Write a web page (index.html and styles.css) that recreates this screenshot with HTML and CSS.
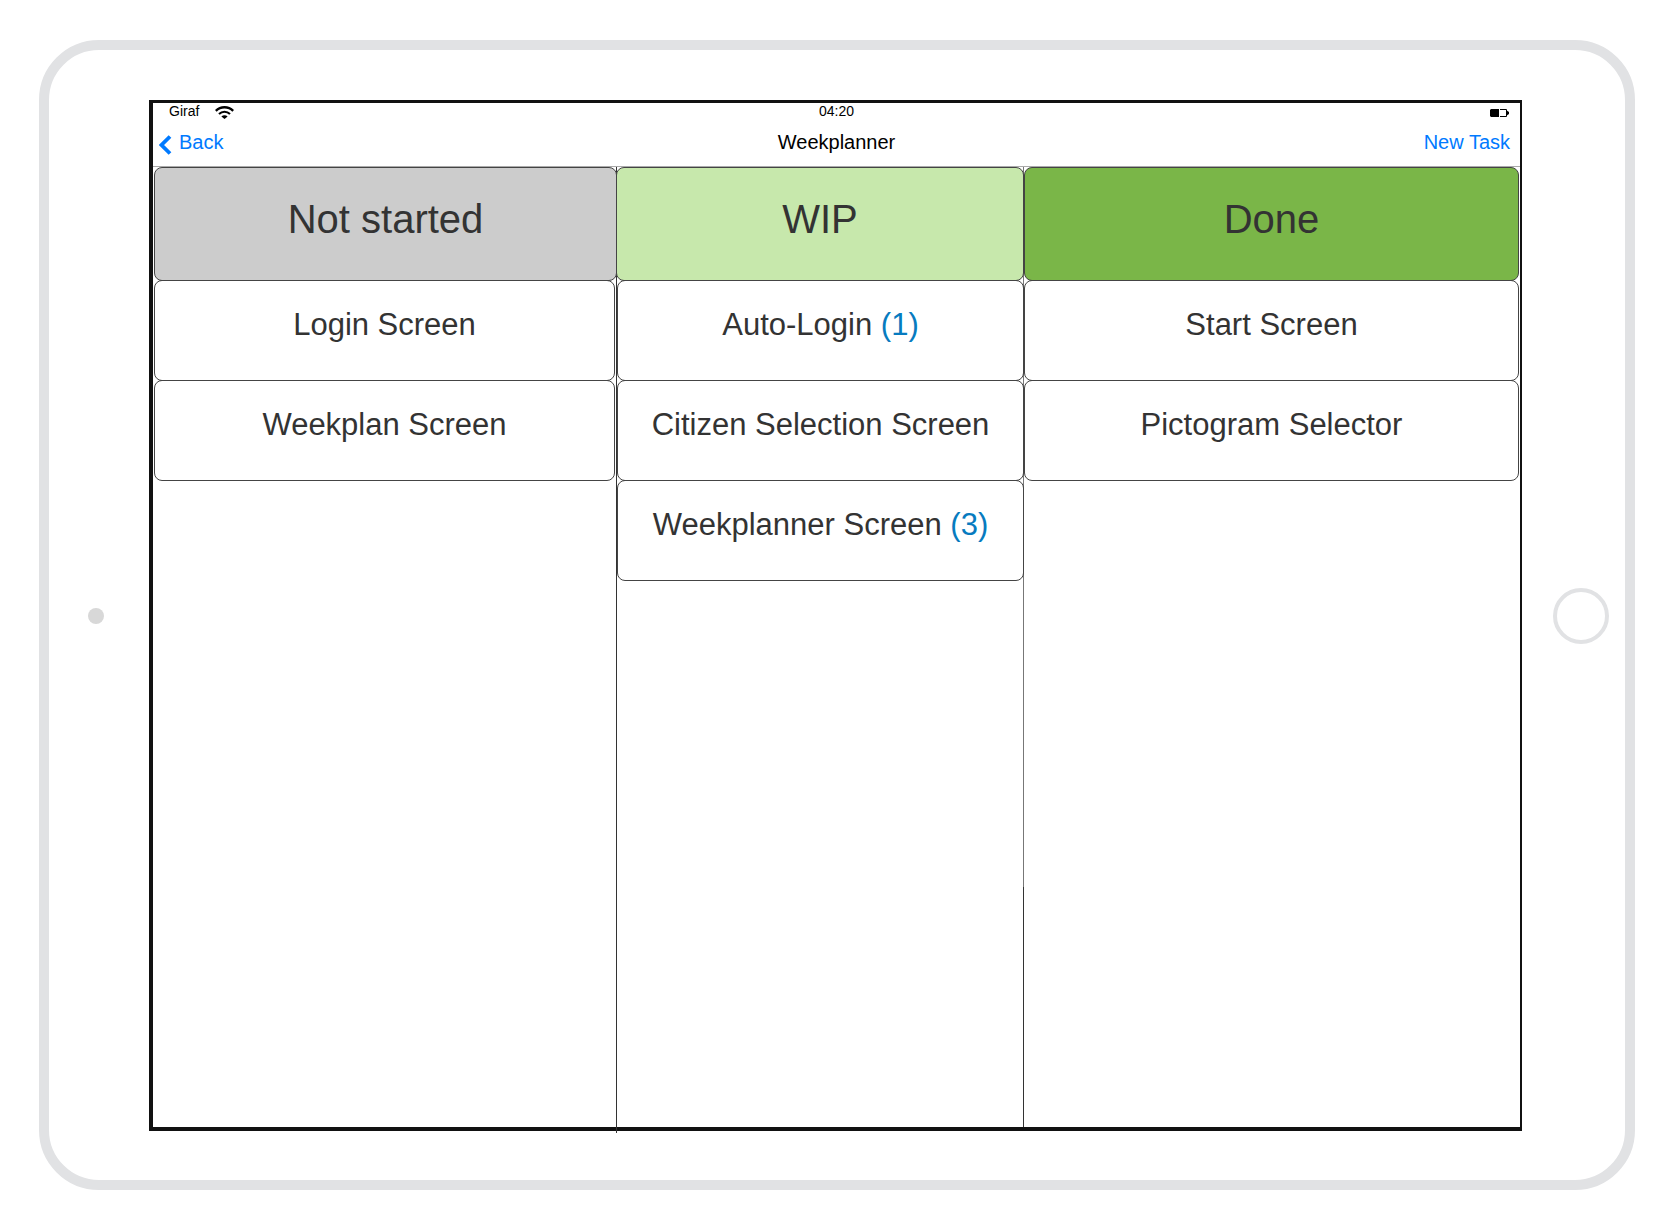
FILE: index.html
```
<!DOCTYPE html>
<html lang="en">
<head>
<meta charset="utf-8">
<meta name="viewport" content="width=device-width, initial-scale=1">
<title>Weekplanner</title>
<link rel="stylesheet" href="styles.css">
</head>
<body>
<div class="tablet">
  <div class="bezel bezel-left"><span class="camera"></span></div>
  <main class="screen">
    <div class="status-bar">
      <div class="carrier">
        <span>Giraf</span>
        <svg class="wifi" width="19" height="13" viewBox="0 0 19 13" aria-hidden="true">
          <path d="M.8 4.8C5.6 0 13.4 0 18.2 4.8" fill="none" stroke="#000" stroke-width="2.4"/>
          <path d="M4 8C7.2 4.9 11.8 4.9 15 8" fill="none" stroke="#000" stroke-width="2.1"/>
          <path d="M6.4 10.4C8.2 8.7 10.8 8.7 12.6 10.4L9.5 13Z"/>
        </svg>
      </div>
      <time>04:20</time>
      <svg class="battery" width="19" height="8" viewBox="0 0 19 8" aria-hidden="true">
        <path d="M1 0H9V8H1L0 7V1Z"/>
        <path d="M10 .5H16.5V7.5H10" fill="none" stroke="#000"/>
        <path d="M16 1L19 3V5L16 7Z"/>
      </svg>
    </div>
    <header class="nav-bar">
      <button class="nav-button back" type="button">
        <svg width="13" height="20" viewBox="0 0 13 20" aria-hidden="true">
          <path d="M11 1.5L2.5 10L11 18.5" fill="none" stroke="#007aff" stroke-width="3.8"/>
        </svg>
        <span>Back</span>
      </button>
      <h1 class="title">Weekplanner</h1>
      <button class="nav-button new-task" type="button">New Task</button>
    </header>
    <div class="board">
      <section class="column not-started">
        <h2 class="column-title">Not started</h2>
        <ul class="tasks">
          <li class="task">Login Screen</li>
          <li class="task">Weekplan Screen</li>
        </ul>
      </section>
      <section class="column wip">
        <h2 class="column-title">WIP</h2>
        <ul class="tasks">
          <li class="task">Auto-Login <span class="count">(1)</span></li>
          <li class="task">Citizen Selection Screen</li>
          <li class="task">Weekplanner Screen <span class="count">(3)</span></li>
        </ul>
      </section>
      <section class="column done">
        <h2 class="column-title">Done</h2>
        <ul class="tasks">
          <li class="task">Start Screen</li>
          <li class="task">Pictogram Selector</li>
        </ul>
      </section>
    </div>
  </main>
  <div class="bezel bezel-right"><button class="home" type="button" aria-label="Home"></button></div>
</div>
</body>
</html>
```
FILE: styles.css
```
* {
  box-sizing: border-box;
}

body {
  margin: 0;
  padding: 40px 40px 40px 39px;
  background: #fff;
  color: #000;
  font-family: "Liberation Sans", Arial, sans-serif;
}

/* Device */
.tablet {
  display: grid;
  grid-template-columns: 100px 1fr 103px;
  min-height: calc(100vh - 80px);
  padding: 50px 0 49px;
  border: 10px solid #e1e2e4;
  border-radius: 60px;
}

.bezel {
  display: flex;
  align-items: center;
  justify-content: center;
}

.bezel-left {
  padding-right: 6px;
}

.bezel-right {
  padding-left: 15px;
}

.camera {
  width: 16px;
  height: 16px;
  border-radius: 50%;
  background: #d8d8d8;
}

.home {
  width: 56px;
  height: 56px;
  padding: 0;
  border: 4px solid #e1e2e4;
  border-radius: 50%;
  background: none;
}

.screen {
  display: flex;
  flex-direction: column;
  border: solid #111;
  border-width: 3px 2px 4px 4px;
}

/* Status bar */
.status-bar {
  display: grid;
  grid-template-columns: 1fr auto 1fr;
  padding: 0 11px;
  font-size: 14px;
  line-height: 16px;
}

.carrier {
  display: flex;
  gap: 16px;
  padding-left: 5px;
}

.wifi {
  margin-top: 3px;
}

.battery {
  justify-self: end;
  margin-top: 6px;
}

/* Navigation bar */
.nav-bar {
  display: grid;
  grid-template-columns: 1fr auto 1fr;
  padding: 11px 10px 12px;
  border-bottom: 1px solid #aaa;
  font-size: 20px;
  line-height: 24px;
}

.title {
  margin: 0;
  font-size: 20px;
  font-weight: 400;
}

.nav-button {
  padding: 0;
  border: 0;
  background: none;
  color: #007aff;
  font: inherit;
}

.back {
  display: flex;
  justify-self: start;
  gap: 7px;
  margin-left: -4px;
}

.back svg {
  margin: 5px 0 -1px;
}

.new-task {
  justify-self: end;
}

/* Board */
.board {
  display: grid;
  grid-template-columns: 463fr 407fr 495fr;
  flex: 1;
  padding: 0 1px;
}

/* The divider is a one-pixel background strip on the column's right edge */
.column {
  background: right / 1px 100% no-repeat;
}

.not-started {
  margin-bottom: -6px;
  background-image: linear-gradient(#333, #333);
}

.wip {
  background-image: linear-gradient(#777 75%, #333 0);
}

.column-title,
.task {
  border: 1px solid #444;
  border-radius: 8px;
  color: #333;
  text-align: center;
}

.column-title {
  margin: 0;
  padding: 28px 8px 38px;
  font-size: 40px;
  font-weight: 400;
  line-height: 46px;
}

.not-started .column-title {
  background: #ccc;
}

.wip .column-title {
  margin-left: -1px;
  background: #c7e8ac;
}

.done .column-title {
  background: #7ab648;
}

.tasks {
  margin: 0;
  padding: 0;
  list-style: none;
}

.not-started .tasks {
  padding-right: 2px;
}

.task {
  margin-top: -1px;
  padding: 26px 8px 37px;
  font-size: 31px;
  line-height: 36px;
}

.count {
  color: #077bbf;
}
```
